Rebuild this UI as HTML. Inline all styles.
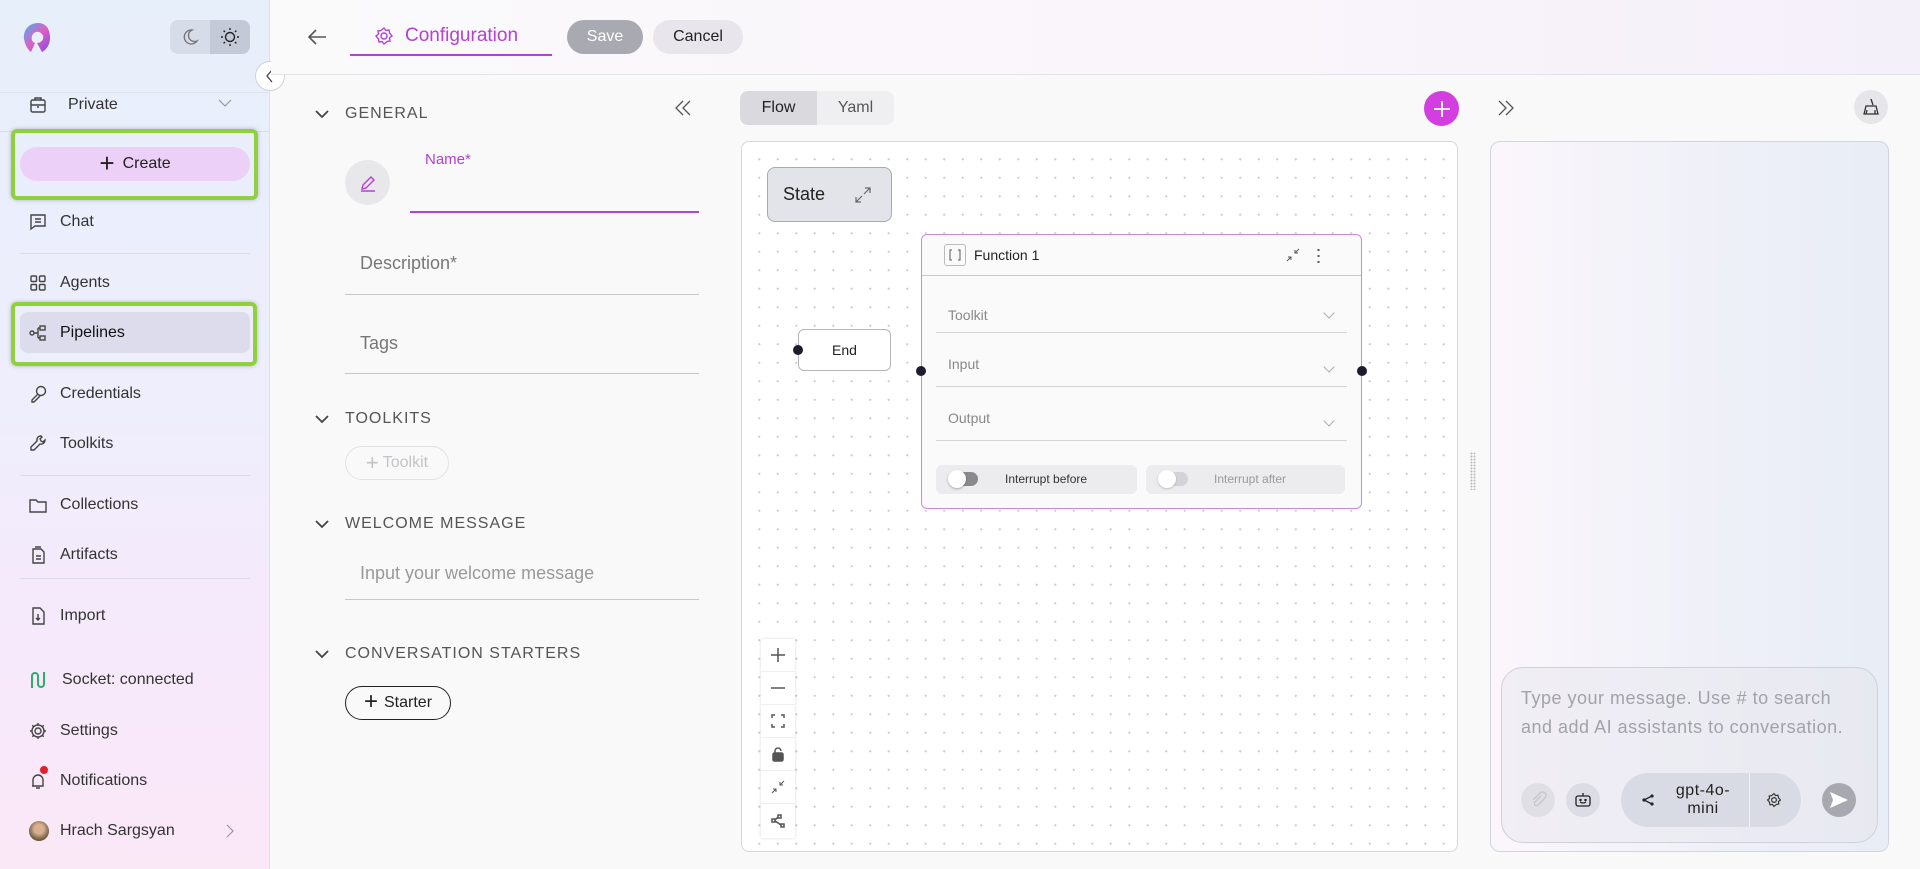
<!DOCTYPE html>
<html><head><meta charset="utf-8">
<style>
*{box-sizing:border-box;margin:0;padding:0}
body{width:1920px;height:869px;overflow:hidden;font-family:"Liberation Sans",sans-serif;background:#f9f9fa;position:relative;color:#222}
.abs{position:absolute}
#side{left:0;top:0;width:270px;height:869px;background:linear-gradient(180deg,#e7effb 0%,#eeeefc 45%,#f6e9fb 75%,#fbe8f7 100%);border-right:1px solid #e0e0ea}
.item{position:absolute;left:28px;font-size:16px;color:#333;display:flex;align-items:center;gap:12px;height:24px;white-space:nowrap}
.item svg{width:20px;height:20px;fill:none;stroke:#444;stroke-width:1.4}
.sep{position:absolute;left:20px;width:230px;height:1px;background:#dcdbe8}
.green{position:absolute;border:4px solid #8ed13c;border-radius:6px;box-shadow:0 0 4px rgba(0,0,0,.25)}
.sec{position:absolute;left:313px;font-size:16px;letter-spacing:1px;color:#555;display:flex;align-items:center;gap:14px}
.sec svg{width:18px;height:18px;fill:none;stroke:#444;stroke-width:1.8}
.line{position:absolute;left:345px;width:354px;height:1px;background:#c8c8cc}
.fld{position:absolute;left:360px;font-size:18px;color:#777}
#canvas{left:741px;top:141px;width:717px;height:711px;background-color:#fff;background-image:radial-gradient(#cfcfd4 1px,transparent 1.2px);background-size:18.5px 18.5px;background-position:8px 8px;border:1px solid #d8d8dc;border-radius:8px}
.dot{position:absolute;width:10px;height:10px;border-radius:50%;background:#1c1c2c}
.fdd{position:absolute;left:14px;width:411px;height:1px;background:#d4d4d8}
.fl{position:absolute;left:26px;font-size:14px;color:#888}
.chev{position:absolute;right:28px;width:8px;height:8px;border-right:1px solid #aaa;border-bottom:1px solid #aaa;transform:rotate(45deg)}
.ctl{height:33px;border-bottom:1px solid #eee;display:flex;align-items:center;justify-content:center}
.ctl svg{width:16px;height:16px;fill:none;stroke:#555;stroke-width:1.5}
.rb{position:absolute;width:34px;height:34px;border-radius:50%;display:flex;align-items:center;justify-content:center}
</style></head><body>

<div id="side" class="abs">
  <svg class="abs" style="left:20px;top:20px" width="36" height="36" viewBox="0 0 36 36"><defs><linearGradient id="lg" x1="0" y1="0" x2="1" y2="1"><stop offset="0" stop-color="#3fb6f0"/><stop offset=".5" stop-color="#e15ec4"/><stop offset="1" stop-color="#7a4de0"/></linearGradient></defs><path d="M18 3C9 3 3 10 4 19c1 6 4 11 7 13l4-9c-3-1-4-4-3-7 1-3 4-5 7-4 3 1 5 4 4 7-1 2-3 4-6 4l5 9c4-2 8-7 8-14C30 9 26 3 18 3z" fill="url(#lg)"/></svg>
  <div class="abs" style="left:170px;top:20px;width:80px;height:34px;border-radius:8px;background:#d6dce8;overflow:hidden">
    <div class="abs" style="left:40px;top:0;width:40px;height:34px;background:#c3c9d6"></div>
    <svg class="abs" style="left:11px;top:8px" width="18" height="18" viewBox="0 0 18 18"><path d="M11 2a7 7 0 1 0 5 11A6 6 0 0 1 11 2z" fill="none" stroke="#777" stroke-width="1.3"/></svg>
    <svg class="abs" style="left:50px;top:7px" width="20" height="20" viewBox="0 0 20 20" fill="none" stroke="#222" stroke-width="1.4"><circle cx="10" cy="10" r="4.5"/><path d="M10 1v2M10 17v2M1 10h2M17 10h2M3.6 3.6l1.4 1.4M15 15l1.4 1.4M3.6 16.4L5 15M15 5l1.4-1.4"/></svg>
  </div>
  <div class="sep" style="top:92px;left:0;width:270px;background:#dde2ee"></div>
  <div class="item" style="top:93px"><svg viewBox="0 0 20 20"><rect x="3" y="5" width="14" height="12" rx="1.5"/><path d="M7 5V3h6v2M3 10h14M9 12h2"/></svg><span style="margin-left:8px">Private</span></div>
  <svg class="abs" style="left:218px;top:98px" width="14" height="10" viewBox="0 0 14 10"><path d="M1 2l6 6 6-6" fill="none" stroke="#999" stroke-width="1.2"/></svg>
  <div class="sep" style="top:131px;left:0;width:270px"></div>
  <div class="abs" style="left:20px;top:147px;width:230px;height:34px;border-radius:17px;background:#ecd0f8;display:flex;align-items:center;justify-content:center;font-size:16px;color:#222;gap:8px"><span style="font-size:26px;font-weight:300;line-height:20px;margin-top:-3px">+</span>Create</div>
  <div class="green" style="left:11px;top:129px;width:247px;height:71px"></div>
  <div class="item" style="top:210px"><svg viewBox="0 0 20 20"><path d="M3 3h14v11H7l-4 3z"/><path d="M7 7h6M7 10h6"/></svg>Chat</div>
  <div class="sep" style="top:253px"></div>
  <div class="item" style="top:271px"><svg viewBox="0 0 20 20"><rect x="3" y="3" width="5.5" height="5.5" rx="1"/><rect x="11.5" y="3" width="5.5" height="5.5" rx="1"/><rect x="3" y="11.5" width="5.5" height="5.5" rx="1"/><rect x="11.5" y="11.5" width="5.5" height="5.5" rx="1"/></svg>Agents</div>
  <div class="abs" style="left:20px;top:312px;width:230px;height:41px;border-radius:8px;background:#dcdcec"></div>
  <div class="item" style="top:321px;color:#111"><svg viewBox="0 0 20 20"><circle cx="4" cy="10" r="2"/><rect x="12" y="3" width="5" height="4"/><rect x="12" y="13" width="5" height="4"/><path d="M6 10h4M10 5v10M10 5h2M10 15h2"/></svg>Pipelines</div>
  <div class="green" style="left:11px;top:302px;width:246px;height:64px"></div>
  <div class="item" style="top:382px"><svg viewBox="0 0 20 20"><circle cx="13" cy="7" r="4.5"/><path d="M10 10l-6 6v2h2l6-6"/></svg>Credentials</div>
  <div class="item" style="top:432px"><svg viewBox="0 0 20 20"><path d="M13 2a4 4 0 0 0-4 5L3 13v3h3l6-6a4 4 0 0 0 5-4l-2 2-2-1-1-2 2-2z"/></svg>Toolkits</div>
  <div class="sep" style="top:475px"></div>
  <div class="item" style="top:493px"><svg viewBox="0 0 20 20"><path d="M2 5h6l2 2h8v10H2z"/></svg>Collections</div>
  <div class="item" style="top:543px"><svg viewBox="0 0 20 20"><path d="M5 4h8l3 3v11H5z"/><path d="M8 11h5M8 14h5M7 2h6"/></svg>Artifacts</div>
  <div class="sep" style="top:578px"></div>
  <div class="item" style="top:604px"><svg viewBox="0 0 20 20"><path d="M5 2h7l4 4v12H5z"/><path d="M10 8v6M8 12l2 2 2-2"/></svg>Import</div>
  <div class="item" style="top:668px;gap:14px"><svg viewBox="0 0 20 20" style="stroke:#2cae6a;stroke-width:2"><path d="M4 18V6a3 3 0 0 1 6 0v8a3 3 0 0 0 6 0V2"/></svg>Socket: connected</div>
  <div class="item" style="top:719px"><svg viewBox="0 0 20 20"><circle cx="10" cy="10" r="3"/><path d="M10 2v2M10 16v2M2 10h2M16 10h2M4.3 4.3l1.4 1.4M14.3 14.3l1.4 1.4M4.3 15.7l1.4-1.4M14.3 5.7l1.4-1.4"/><circle cx="10" cy="10" r="6"/></svg>Settings</div>
  <div class="item" style="top:769px"><svg viewBox="0 0 20 20"><path d="M5 15V9a5 5 0 0 1 10 0v6H4M8 17h4"/></svg>Notifications</div>
  <div class="abs" style="left:40px;top:766px;width:8px;height:8px;border-radius:50%;background:#e0202a"></div>
  <div class="abs" style="left:29px;top:821px;width:20px;height:20px;border-radius:50%;background:radial-gradient(circle at 50% 40%,#d8b090 30%,#6a5a40 70%)"></div>
  <div class="item" style="top:819px;left:60px">Hrach Sargsyan</div>
  <svg class="abs" style="left:225px;top:824px" width="10" height="14" viewBox="0 0 10 14"><path d="M2 1l6 6-6 6" fill="none" stroke="#999" stroke-width="1.2"/></svg>
</div>
<div class="abs" style="left:255px;top:61px;width:30px;height:30px;border-radius:50%;background:#fff;border:1px solid #d0d0d8;display:flex;align-items:center;justify-content:center"><svg width="10" height="14" viewBox="0 0 10 14"><path d="M7 1L2 7l5 6" fill="none" stroke="#444" stroke-width="1.3"/></svg></div>

<div class="abs" style="left:271px;top:0;width:1649px;height:75px;background:linear-gradient(90deg,#fafafb,#faf4fb 60%,#f4f0fa);border-bottom:1px solid #e4e4e8"></div>
<svg class="abs" style="left:306px;top:27px" width="22" height="20" viewBox="0 0 22 20"><path d="M20 10H3M10 3l-7 7 7 7" fill="none" stroke="#555" stroke-width="1.6"/></svg>
<svg class="abs" style="left:374px;top:26px" width="20" height="20" viewBox="0 0 20 20" fill="none" stroke="#b341d2" stroke-width="1.4"><circle cx="10" cy="10" r="3"/><path d="M10 2l2 2.5 3-.5.5 3L18 10l-2.5 2 .5 3-3 .5L10 18l-2-2.5-3 .5-.5-3L2 10l2.5-2-.5-3 3-.5z"/></svg>
<div class="abs" style="left:405px;top:25px;font-size:19px;color:#b341d2">Configuration</div>
<div class="abs" style="left:350px;top:54px;width:202px;height:2px;background:#b341d2"></div>
<div class="abs" style="left:567px;top:20px;width:76px;height:34px;border-radius:17px;background:#a9a9b2;color:#fff;font-size:16px;display:flex;align-items:center;justify-content:center">Save</div>
<div class="abs" style="left:653px;top:20px;width:90px;height:34px;border-radius:17px;background:#e8e6ec;color:#222;font-size:16px;display:flex;align-items:center;justify-content:center">Cancel</div>

<div class="sec" style="top:105px"><svg viewBox="0 0 18 18"><path d="M3 6l6 6 6-6"/></svg>GENERAL</div>
<svg class="abs" style="left:673px;top:99px" width="20" height="18" viewBox="0 0 20 18"><path d="M10 2L3 9l7 7M17 2l-7 7 7 7" fill="none" stroke="#555" stroke-width="1.3"/></svg>
<div class="abs" style="left:345px;top:160px;width:45px;height:45px;border-radius:50%;background:#e8e8ea;display:flex;align-items:center;justify-content:center"><svg width="20" height="20" viewBox="0 0 20 20"><path d="M4 16l1-4 8-8 3 3-8 8zM3 18h14" fill="none" stroke="#b341d2" stroke-width="1.4"/></svg></div>
<div class="abs" style="left:425px;top:151px;font-size:15px;color:#b341d2">Name*</div>
<div class="abs" style="left:410px;top:211px;width:289px;height:2px;background:#b341d2"></div>
<div class="fld" style="top:253px">Description*</div>
<div class="line" style="top:294px"></div>
<div class="fld" style="top:333px">Tags</div>
<div class="line" style="top:373px"></div>
<div class="sec" style="top:410px"><svg viewBox="0 0 18 18"><path d="M3 6l6 6 6-6"/></svg>TOOLKITS</div>
<div class="abs" style="left:345px;top:446px;width:104px;height:34px;border-radius:17px;border:1px solid #e2e2e4;color:#c4c4c8;font-size:16px;display:flex;align-items:center;justify-content:center;gap:4px"><span style="font-size:22px;font-weight:300">+</span>Toolkit</div>
<div class="sec" style="top:515px"><svg viewBox="0 0 18 18"><path d="M3 6l6 6 6-6"/></svg>WELCOME MESSAGE</div>
<div class="fld" style="top:563px;color:#999">Input your welcome message</div>
<div class="line" style="top:599px"></div>
<div class="sec" style="top:645px"><svg viewBox="0 0 18 18"><path d="M3 6l6 6 6-6"/></svg>CONVERSATION STARTERS</div>
<div class="abs" style="left:345px;top:686px;width:106px;height:34px;border-radius:17px;border:1px solid #222;color:#222;font-size:16px;display:flex;align-items:center;justify-content:center;gap:6px"><span style="font-size:24px;font-weight:300;margin-top:-3px">+</span>Starter</div>

<div class="abs" style="left:740px;top:91px;width:154px;height:34px;border-radius:8px;background:#efeff1;overflow:hidden;font-size:16px">
  <div class="abs" style="left:0;top:0;width:77px;height:34px;background:#d9d9de;display:flex;align-items:center;justify-content:center;color:#222">Flow</div>
  <div class="abs" style="left:77px;top:0;width:77px;height:34px;display:flex;align-items:center;justify-content:center;color:#555">Yaml</div>
</div>
<div class="abs" style="left:1424px;top:91px;width:35px;height:35px;border-radius:50%;background:#d23ee0;display:flex;align-items:center;justify-content:center"><svg width="20" height="20" viewBox="0 0 20 20"><path d="M10 2v16M2 10h16" stroke="#fff" stroke-width="1.8"/></svg></div>

<div id="canvas" class="abs">
  <div class="abs" style="left:25px;top:25px;width:125px;height:55px;border-radius:8px;background:#e2e4e9;border:1px solid #a8aab2;font-size:18px;color:#222;display:flex;align-items:center;padding-left:15px">State
    <svg class="abs" style="left:86px;top:18px" width="18" height="18" viewBox="0 0 18 18"><path d="M11 2h5v5M16 2l-6 6M7 16H2v-5M2 16l6-6" fill="none" stroke="#666" stroke-width="1.2"/></svg></div>
  <div class="abs" style="left:56px;top:187px;width:93px;height:42px;border-radius:6px;background:#fff;border:1px solid #b5b5bb;font-size:14px;display:flex;align-items:center;justify-content:center">End</div>
  <div class="dot" style="left:51px;top:203px"></div>
  <div class="abs" style="left:179px;top:92px;width:441px;height:275px;border-radius:6px;border:1px solid #cf88db;background:#fafafa">
    <div class="abs" style="left:0;top:0;width:439px;height:41px;border-bottom:1px solid #c8c8cc"></div>
    <div class="abs" style="left:22px;top:9px;width:22px;height:22px;border:1px solid #bbb;border-radius:3px"></div>
    <svg class="abs" style="left:22px;top:9px" width="22" height="22" viewBox="0 0 22 22"><path d="M8 6H6v10h2M14 6h2v10h-2" fill="none" stroke="#555" stroke-width="1"/></svg>
    <div class="abs" style="left:52px;top:12px;font-size:14px;color:#222">Function 1</div>
    <svg class="abs" style="left:364px;top:13px" width="14" height="14" viewBox="0 0 14 14"><path d="M13 1L9 5M9 2v3h3M1 13l4-4M5 12V9H2" fill="none" stroke="#555" stroke-width="1"/></svg>
    <div class="abs" style="left:395px;top:12px;width:3px;height:16px;background:radial-gradient(circle,#555 1px,transparent 1.3px);background-size:3px 6px"></div>
    <div class="fl" style="top:72px">Toolkit</div><div class="chev" style="top:74px"></div><div class="fdd" style="top:97px"></div>
    <div class="fl" style="top:121px">Input</div><div class="chev" style="top:128px"></div><div class="fdd" style="top:151px"></div>
    <div class="fl" style="top:175px">Output</div><div class="chev" style="top:182px"></div><div class="fdd" style="top:205px"></div>
    <div class="abs" style="left:14px;top:230px;width:201px;height:29px;border-radius:6px;background:#ececee">
      <div class="abs" style="left:14px;top:7px;width:28px;height:14px;border-radius:7px;background:#8a8a8e"></div>
      <div class="abs" style="left:12px;top:5px;width:18px;height:18px;border-radius:50%;background:#fff;box-shadow:0 1px 2px rgba(0,0,0,.3)"></div>
      <div class="abs" style="left:69px;top:7px;font-size:12px;color:#333">Interrupt before</div>
    </div>
    <div class="abs" style="left:224px;top:230px;width:199px;height:29px;border-radius:6px;background:#ececee">
      <div class="abs" style="left:14px;top:7px;width:28px;height:14px;border-radius:7px;background:#d4d4d8"></div>
      <div class="abs" style="left:12px;top:5px;width:18px;height:18px;border-radius:50%;background:#fff;box-shadow:0 1px 2px rgba(0,0,0,.2)"></div>
      <div class="abs" style="left:68px;top:7px;font-size:12px;color:#999">Interrupt after</div>
    </div>
  </div>
  <div class="dot" style="left:174px;top:224px"></div>
  <div class="dot" style="left:615px;top:224px"></div>
  <div class="abs" style="left:19px;top:497px;width:34px;height:199px;background:#fff;box-shadow:0 0 3px rgba(0,0,0,.15)">
    <div class="ctl"><svg viewBox="0 0 16 16"><path d="M8 1v14M1 8h14"/></svg></div>
    <div class="ctl"><svg viewBox="0 0 16 16"><path d="M1 8h14"/></svg></div>
    <div class="ctl"><svg viewBox="0 0 16 16"><path d="M2 5V2h3M11 2h3v3M14 11v3h-3M5 14H2v-3"/></svg></div>
    <div class="ctl"><svg viewBox="0 0 16 16"><rect x="3" y="7" width="10" height="8" rx="1.5" fill="#555"/><path d="M5 7V5a3 3 0 0 1 6 0"/></svg></div>
    <div class="ctl"><svg viewBox="0 0 16 16" style="stroke-width:1"><path d="M14 2l-4 4M10 3v3h3M2 14l4-4M6 13v-3H3"/></svg></div>
    <div class="ctl" style="border:none"><svg viewBox="0 0 16 16"><rect x="2" y="6" width="3" height="3"/><rect x="8" y="2" width="3" height="3"/><rect x="11" y="11" width="3" height="3"/><path d="M5 7l3-3M5 8l6 4"/></svg></div>
  </div>
</div>

<div class="abs" style="left:1470px;top:452px;width:6px;height:38px;background:radial-gradient(circle,#bbb 0.8px,transparent 1.1px);background-size:3px 3px"></div>
<svg class="abs" style="left:1496px;top:99px" width="20" height="18" viewBox="0 0 20 18"><path d="M3 2l7 7-7 7M10 2l7 7-7 7" fill="none" stroke="#555" stroke-width="1.3"/></svg>
<div class="rb" style="left:1854px;top:90px;background:#e6e6ea"><svg width="20" height="20" viewBox="0 0 20 20" fill="none" stroke="#333" stroke-width="1.3"><path d="M10 2l2 6M5 9h10l2 8H3zM6 13l-1 4M14 13v4"/></svg></div>

<div class="abs" style="left:1490px;top:141px;width:399px;height:711px;border-radius:10px;border:1px solid #d4d4dc;background:linear-gradient(90deg,#fbf6fc,#eef0f8 60%,#e8edf6)"></div>
<div class="abs" style="left:1501px;top:667px;width:377px;height:176px;border-radius:22px;border:1px solid #d0d0d8;background:linear-gradient(90deg,#f1eef5,#e7e9f1)"></div>
<div class="abs" style="left:1521px;top:684px;font-size:18px;line-height:29px;color:#a2a2aa;width:345px;letter-spacing:.5px">Type your message. Use # to search and add AI assistants to conversation.</div>
<div class="rb" style="left:1521px;top:783px;background:#e0dfe6"><svg width="18" height="18" viewBox="0 0 18 18"><path d="M12 5l-6 6a2 2 0 0 0 3 3l7-7a3.5 3.5 0 0 0-5-5L4 9" fill="none" stroke="#c4c4ca" stroke-width="1.3"/></svg></div>
<div class="rb" style="left:1566px;top:783px;background:#dcdce4"><svg width="20" height="20" viewBox="0 0 20 20" fill="none" stroke="#222" stroke-width="1.3"><rect x="3" y="6" width="14" height="10" rx="2"/><path d="M10 3v3M7 12q3 2 6 0"/><circle cx="7.5" cy="10" r=".6" fill="#222"/><circle cx="12.5" cy="10" r=".6" fill="#222"/></svg></div>
<div class="abs" style="left:1621px;top:773px;width:180px;height:54px;border-radius:27px;background:#d9dbe4;overflow:hidden">
  <div class="abs" style="left:128px;top:0;width:1px;height:54px;background:#f0f0f4"></div>
  <svg class="abs" style="left:20px;top:20px" width="14" height="14" viewBox="0 0 14 14"><circle cx="3" cy="7" r="1.6" fill="#222"/><circle cx="11" cy="3" r="1.6" fill="#222"/><circle cx="11" cy="11" r="1.6" fill="#222"/><path d="M3 7l8-4M3 7l8 4" stroke="#222" stroke-width="1.3"/></svg>
  <div class="abs" style="left:44px;top:9px;width:76px;text-align:center;font-size:16px;line-height:18px;color:#222;letter-spacing:.5px">gpt-4o-<br>mini</div>
  <svg class="abs" style="left:145px;top:19px" width="16" height="16" viewBox="0 0 20 20" fill="none" stroke="#333" stroke-width="1.5"><circle cx="10" cy="10" r="3"/><path d="M10 2l2 2.5 3-.5.5 3L18 10l-2.5 2 .5 3-3 .5L10 18l-2-2.5-3 .5-.5-3L2 10l2.5-2-.5-3 3-.5z"/></svg>
</div>
<div class="rb" style="left:1822px;top:783px;background:#a8a8b0"><svg width="20" height="18" viewBox="0 0 20 18"><path d="M1 1l18 8-18 8 3-8z" fill="#fff"/></svg></div>

</body></html>
